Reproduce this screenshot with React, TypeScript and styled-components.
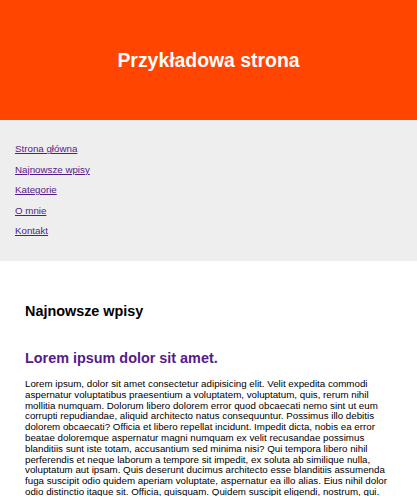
import React from "react";
import styled, { createGlobalStyle } from "styled-components";

const Global = createGlobalStyle`
  html, body { margin: 0; padding: 0; background: #fff; }
  body { font-family: "Liberation Sans", Arial, sans-serif; }
`;

const Header = styled.header`
  height: 120px;
  background: #ff4500;
  display: flex;
  align-items: center;
  justify-content: center;
`;

const Title = styled.h1`
  margin: 0;
  color: #fff;
  font-size: 19.4px;
  line-height: 24px;
  font-weight: bold;
`;

const Nav = styled.nav`
  background: #eee;
  padding: 17.25px 15px 21.25px;
`;

const NavList = styled.ul`
  list-style: none;
  margin: 0;
  padding: 0;
  display: flex;
  flex-direction: column;
`;

const NavItem = styled.li`
  height: 20.5px;
  line-height: 20.5px;
`;

const NavLink = styled.a`
  font-size: 9.75px;
  color: #551a8b;
  text-decoration: underline;
`;

const Main = styled.main`
  padding: 41.5px 25px 20px;
`;

const SectionTitle = styled.h2`
  margin: 0;
  font-size: 14.4px;
  line-height: 17px;
  font-weight: bold;
  color: #000;
`;

const PostTitle = styled.h3`
  margin: 30.5px 0 0;
  font-size: 14.4px;
  line-height: 17px;
  font-weight: bold;
  color: #551a8b;
`;

const Paragraph = styled.p`
  margin: 12px 0 0;
  font-size: 9.75px;
  line-height: 10.8px;
  color: #000;
`;

const links = ["Strona główna", "Najnowsze wpisy", "Kategorie", "O mnie", "Kontakt"];

export default function App() {
  return (
    <>
      <Global />
      <Header>
        <Title>Przykładowa strona</Title>
      </Header>
      <Nav>
        <NavList>
          {links.map((l) => (
            <NavItem key={l}>
              <NavLink href="#">{l}</NavLink>
            </NavItem>
          ))}
        </NavList>
      </Nav>
      <Main>
        <SectionTitle>Najnowsze wpisy</SectionTitle>
        <article>
          <PostTitle>Lorem ipsum dolor sit amet.</PostTitle>
          <Paragraph>
            Lorem ipsum, dolor sit amet consectetur adipisicing elit. Velit expedita commodi aspernatur voluptatibus praesentium a voluptatem, voluptatum, quis, rerum nihil mollitia numquam. Dolorum libero dolorem error quod obcaecati nemo sint ut eum corrupti repudiandae, aliquid architecto natus consequuntur. Possimus illo debitis dolorem obcaecati? Officia et libero repellat incidunt. Impedit dicta, nobis ea error beatae doloremque aspernatur magni numquam ex velit recusandae possimus blanditiis sunt iste totam, accusantium sed minima nisi? Qui tempora libero nihil perferendis et neque laborum a tempore sit impedit, ex soluta ab similique nulla, voluptatum aut ipsam. Quis deserunt ducimus architecto esse blanditiis assumenda fuga suscipit odio quidem aperiam voluptate, aspernatur ea illo alias. Eius nihil dolor odio distinctio itaque sit. Officia, quisquam. Quidem suscipit eligendi, nostrum, qui.
          </Paragraph>
        </article>
      </Main>
    </>
  );
}
